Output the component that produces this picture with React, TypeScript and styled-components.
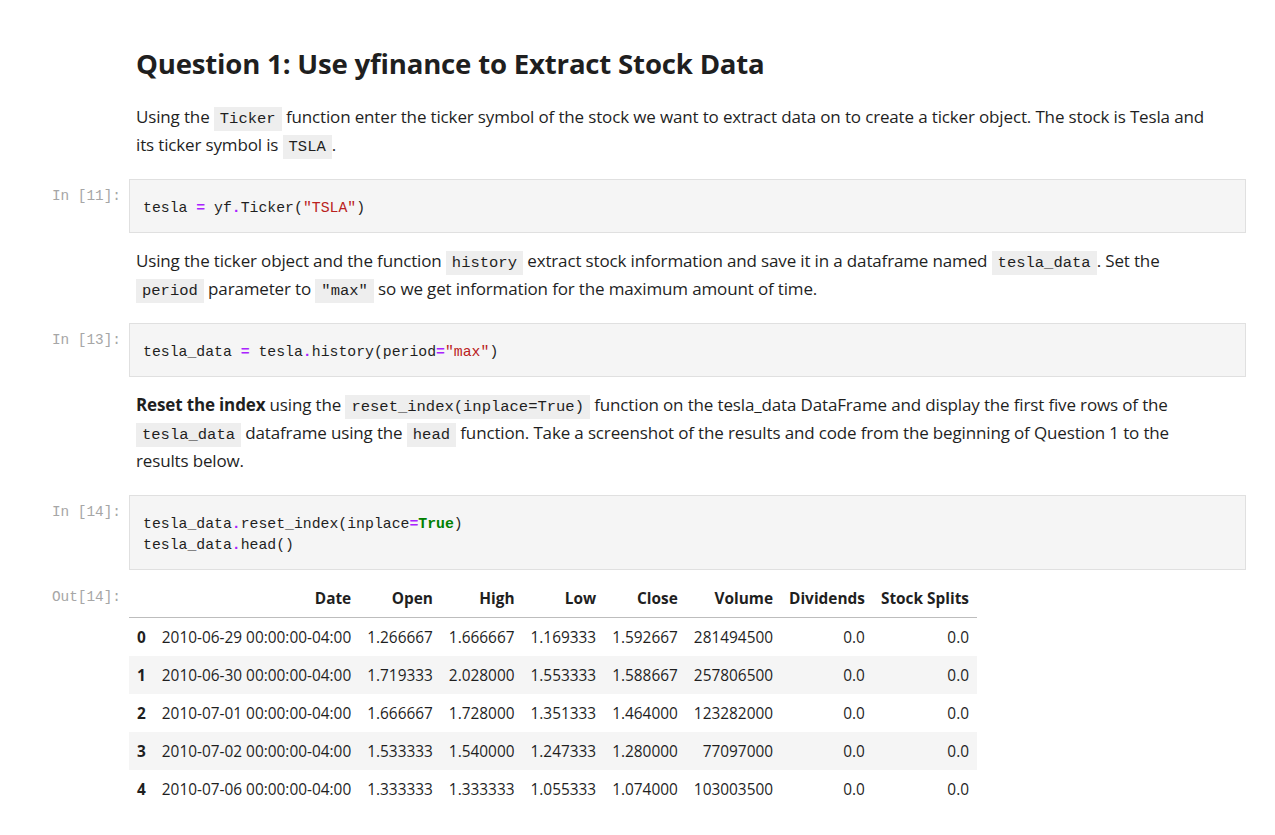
import styled, { createGlobalStyle } from 'styled-components'

const GlobalStyle = createGlobalStyle`
  html, body {
    margin: 0;
    padding: 0;
    background: #ffffff;
  }
  body {
    font-family: "Open Sans", "Noto Sans", sans-serif;
    color: #1f1f1f;
  }
`

const rows = [
  { i: '0', date: '2010-06-29 00:00:00-04:00', open: '1.266667', high: '1.666667', low: '1.169333', close: '1.592667', vol: '281494500' },
  { i: '1', date: '2010-06-30 00:00:00-04:00', open: '1.719333', high: '2.028000', low: '1.553333', close: '1.588667', vol: '257806500' },
  { i: '2', date: '2010-07-01 00:00:00-04:00', open: '1.666667', high: '1.728000', low: '1.351333', close: '1.464000', vol: '123282000' },
  { i: '3', date: '2010-07-02 00:00:00-04:00', open: '1.533333', high: '1.540000', low: '1.247333', close: '1.280000', vol: '77097000' },
  { i: '4', date: '2010-07-06 00:00:00-04:00', open: '1.333333', high: '1.333333', low: '1.055333', close: '1.074000', vol: '103003500' },
]

export default function App() {
  return (
    <Notebook>
      <GlobalStyle />
      <Cell>
        <Prompt />
        <Markdown>
          <Heading>Question 1: Use yfinance to Extract Stock Data</Heading>
          <Para>
            Using the <Code>Ticker</Code> function enter the ticker symbol of the stock we want to extract data on to create a ticker object. The stock is Tesla and<br />
            its ticker symbol is <Code>TSLA</Code>.
          </Para>
        </Markdown>
      </Cell>

      <Cell>
        <Prompt>In [11]:</Prompt>
        <InputArea>
          <Line>tesla <Op>=</Op> yf<Op>.</Op>Ticker(<Str>"TSLA"</Str>)</Line>
        </InputArea>
      </Cell>

      <Cell>
        <Prompt />
        <Markdown>
          <Para>
            Using the ticker object and the function <Code>history</Code> extract stock information and save it in a dataframe named <Code>tesla_data</Code>. Set the<br />
            <Code>period</Code> parameter to <Code>"max"</Code> so we get information for the maximum amount of time.
          </Para>
        </Markdown>
      </Cell>

      <Cell>
        <Prompt>In [13]:</Prompt>
        <InputArea>
          <Line>tesla_data <Op>=</Op> tesla<Op>.</Op>history(period<Op>=</Op><Str>"max"</Str>)</Line>
        </InputArea>
      </Cell>

      <Cell>
        <Prompt />
        <Markdown>
          <Para>
            <strong>Reset the index</strong> using the <Code>reset_index(inplace=True)</Code> function on the tesla_data DataFrame and display the first five rows of the<br />
            <Code>tesla_data</Code> dataframe using the <Code>head</Code> function. Take a screenshot of the results and code from the beginning of Question 1 to the<br />
            results below.
          </Para>
        </Markdown>
      </Cell>

      <Cell>
        <Prompt>In [14]:</Prompt>
        <InputArea>
          <Line>tesla_data<Op>.</Op>reset_index(inplace<Op>=</Op><Kw>True</Kw>)</Line>
          <Line>tesla_data<Op>.</Op>head()</Line>
        </InputArea>
      </Cell>

      <Cell>
        <Prompt $out>Out[14]:</Prompt>
        <OutputArea>
          <Frame>
            <thead>
              <tr>
                <HeadCell></HeadCell>
                <HeadCell>Date</HeadCell>
                <HeadCell>Open</HeadCell>
                <HeadCell>High</HeadCell>
                <HeadCell>Low</HeadCell>
                <HeadCell>Close</HeadCell>
                <HeadCell>Volume</HeadCell>
                <HeadCell>Dividends</HeadCell>
                <HeadCell>Stock Splits</HeadCell>
              </tr>
            </thead>
            <tbody>
              {rows.map((r) => (
                <Tr key={r.i}>
                  <Th>{r.i}</Th>
                  <Td>{r.date}</Td>
                  <Td>{r.open}</Td>
                  <Td>{r.high}</Td>
                  <Td>{r.low}</Td>
                  <Td>{r.close}</Td>
                  <Td>{r.vol}</Td>
                  <Td>0.0</Td>
                  <Td>0.0</Td>
                </Tr>
              ))}
            </tbody>
          </Frame>
        </OutputArea>
      </Cell>
    </Notebook>
  )
}

const Notebook = styled.main`
  width: 1246px;
  padding-top: 40px;
  padding-bottom: 20px;
`
const Cell = styled.div`
  display: flex;
  align-items: flex-start;
`
const Prompt = styled.div<{ $out?: boolean }>`
  flex: 0 0 121px;
  padding-right: 8px;
  text-align: right;
  font-family: "Liberation Mono", "DejaVu Sans Mono", monospace;
  font-size: 14.4px;
  line-height: 20px;
  color: #a6a6a6;
  padding-top: ${(p) => (p.$out ? '3px' : '7px')};
`
const Markdown = styled.div`
  flex: 1;
  padding: 0 7px;
`
const Heading = styled.h1`
  font-size: 27.6px;
  font-weight: 700;
  margin: 0 0 17px;
  line-height: 46px;
  letter-spacing: -0.2px;
`
const Para = styled.p`
  font-size: 17px;
  line-height: 28px;
  margin: 0 0 20px;
  letter-spacing: -0.15px;
  strong { font-weight: 700; }
`
const Code = styled.code`
  font-family: "Liberation Mono", "DejaVu Sans Mono", monospace;
  font-size: 15.5px;
  line-height: 1;
  background: #eeeeee;
  padding: 3px 6px;
  letter-spacing: 0;
`
const InputArea = styled.div`
  flex: 1;
  background: #f5f5f5;
  border: 1px solid #e0e0e0;
  padding: 18px 13px 13px;
  margin-bottom: 14px;
`
const Line = styled.div`
  font-family: "Liberation Mono", "DejaVu Sans Mono", monospace;
  font-size: 14.8px;
  line-height: 21px;
  color: #1f1f1f;
  white-space: pre;
`
const Op = styled.span`
  color: #aa22ff;
  font-weight: 700;
`
const Str = styled.span`
  color: #ba2121;
`
const Kw = styled.span`
  color: #008000;
  font-weight: 700;
`
const OutputArea = styled.div`
  flex: 1;
`
const Frame = styled.table`
  border-collapse: collapse;
  font-size: 15.4px;
`
const Tr = styled.tr`
  &:nth-child(even) {
    background: #f5f5f5;
  }
`
const Th = styled.th`
  font-weight: 700;
  text-align: right;
  padding: 8px;
  height: 22px;
  white-space: nowrap;
`
const HeadCell = styled.th`
  font-weight: 700;
  text-align: right;
  vertical-align: bottom;
  padding: 4px 8px 8px;
  line-height: 21px;
  border-bottom: 1px solid #bdbdbd;
  white-space: nowrap;
`
const Td = styled.td`
  text-align: right;
  padding: 8px;
  height: 22px;
  white-space: nowrap;
`
